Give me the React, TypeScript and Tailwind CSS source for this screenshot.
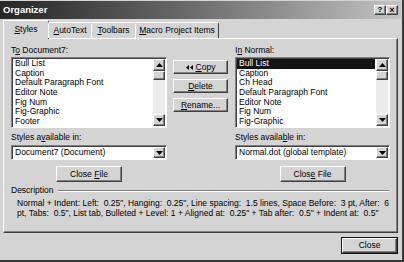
import React from "react";

const raised =
  "border border-t-white border-l-white border-r-[#404040] border-b-[#404040] shadow-[inset_-1px_-1px_#808080]";
const sunken =
  "border border-t-[#808080] border-l-[#808080] border-r-white border-b-white shadow-[inset_1px_1px_#404040]";

function Tri({ dir }: { dir: "up" | "down" | "left" }) {
  if (dir === "left")
    return (
      <svg width="7" height="5" viewBox="0 0 7 5" className="inline-block mr-[3px] align-middle">
        <polygon points="3,0 3,5 0,2.5" fill="#000" />
        <polygon points="7,0 7,5 4,2.5" fill="#000" />
      </svg>
    );
  return (
    <svg width="7" height="4" viewBox="0 0 7 4">
      <polygon points={dir === "up" ? "3.5,0 7,4 0,4" : "0,0 7,0 3.5,4"} fill="#000" />
    </svg>
  );
}

function Scrollbar() {
  return (
    <div className="w-[12px] flex flex-col">
      <div className={`${raised} h-[12px] bg-[#d4d4d4] flex items-center justify-center`}>
        <Tri dir="up" />
      </div>
      <div className={`${raised} h-[9px] bg-[#d4d4d4]`} />
      <div className="flex-1 bg-[#ececec]" />
      <div className={`${raised} h-[12px] bg-[#d4d4d4] flex items-center justify-center`}>
        <Tri dir="down" />
      </div>
    </div>
  );
}

function ListBox({ items, selected }: { items: string[]; selected?: number }) {
  return (
    <div className={`${sunken} h-[71px] flex bg-white p-[1px]`}>
      <div className="flex-1 flex flex-col pr-[1px]">
        {items.map((it, i) => (
          <div
            key={it}
            className={`h-[9.7px] leading-[9.7px] pl-[2px] whitespace-nowrap ${
              i === selected ? "bg-[#141414] text-white" : ""
            }`}
          >
            {it}
          </div>
        ))}
      </div>
      <Scrollbar />
    </div>
  );
}

function Dropdown({ value }: { value: string }) {
  return (
    <div className={`${sunken} h-[15px] flex items-stretch bg-white p-[1px]`}>
      <div className="flex-1 pl-[2px] leading-[11px] whitespace-nowrap">{value}</div>
      <div className={`${raised} w-[12px] bg-[#d4d4d4] flex items-center justify-center`}>
        <Tri dir="down" />
      </div>
    </div>
  );
}

function Btn({ children, className = "" }: { children: React.ReactNode; className?: string }) {
  return (
    <div
      className={`${raised} bg-[#d4d4d4] flex items-center justify-center whitespace-nowrap ${className}`}
    >
      <span>{children}</span>
    </div>
  );
}

function Column({
  label,
  items,
  selected,
  avail,
  dropdown,
  closeLabel,
}: {
  label: React.ReactNode;
  items: string[];
  selected?: number;
  avail: React.ReactNode;
  dropdown: string;
  closeLabel: React.ReactNode;
}) {
  return (
    <div className="flex flex-col">
      <div className="h-[11px] leading-[11px]">{label}</div>
      <div className="mt-[1px]">
        <ListBox items={items} selected={selected} />
      </div>
      <div className="h-[11px] leading-[11px] mt-[4px]">{avail}</div>
      <div className="mt-[2px]">
        <Dropdown value={dropdown} />
      </div>
      <div className="flex justify-center mt-[6px]">
        <Btn className="w-[66px] h-[16px]">{closeLabel}</Btn>
      </div>
    </div>
  );
}

export default function App() {
  const tabs = [
    { k: "S", r: "tyles", w: "w-[46px]" },
    { k: "A", r: "utoText", w: "w-[44px]" },
    { k: "T", r: "oolbars", w: "w-[45px]" },
    { k: "M", r: "acro Project Items", w: "w-[84px]" },
  ];
  return (
    <div className="w-[404px] h-[262px] bg-[#d4d4d4] font-['Liberation_Sans',Arial,sans-serif] text-[8.5px] text-black flex flex-col border-r-2 border-b-2 border-r-[#3a3a3a] border-b-[#3a3a3a] overflow-hidden">
      {/* title bar */}
      <div className="h-[18px] mt-[1px] mr-[1px] bg-linear-to-r from-[#262626] to-[#c4c4c4] flex items-center justify-between pl-[3px] pr-[3px]">
        <span className="text-white font-bold text-[9.5px]">Organizer</span>
        <div className="flex">
          <div className={`${raised} bg-[#d4d4d4] w-[12px] h-[10px] flex items-center justify-center font-bold text-[8px] leading-none`}>
            ?
          </div>
          <div className={`${raised} bg-[#d4d4d4] w-[12px] h-[10px] flex items-center justify-center font-bold text-[9px] leading-none`}>
            ×
          </div>
        </div>
      </div>

      {/* tabs */}
      <div className="flex items-end h-[19px] pl-[3px] relative z-10">
        {tabs.map((t, i) => (
          <div
            key={t.k}
            className={`${t.w} border-t border-l border-r border-t-white border-l-white border-r-[#404040] rounded-t-[2px] flex items-center justify-center ${
              i === 0 ? "h-[19px] bg-[#d4d4d4] -mb-[1px] pb-[1px]" : "h-[16px] -ml-[1px]"
            }`}
          >
            <span>
              <span className="underline">{t.k}</span>
              {t.r}
            </span>
          </div>
        ))}
      </div>

      {/* panel */}
      <div className="h-[195px] ml-[3px] mr-[4px] border border-t-white border-l-white border-r-[#404040] border-b-[#404040] shadow-[inset_-1px_-1px_#808080] px-[7px] pt-[6px] flex flex-col">
        <div className="flex">
          <div className="w-[156px]">
            <Column
              label={<>T<span className="underline">o</span> Document7:</>}
              items={["Bull List", "Caption", "Default Paragraph Font", "Editor Note", "Fig Num", "Fig-Graphic", "Footer"]}
              avail={<>Styles a<span className="underline">v</span>ailable in:</>}
              dropdown="Document7 (Document)"
              closeLabel={<>Close <span className="underline">F</span>ile</>}
            />
          </div>
          <div className="w-[55px] ml-[6px] mt-[15px] flex flex-col gap-[5px]">
            <Btn className="h-[14px]">
              <Tri dir="left" />
              <span className="underline">C</span>opy
            </Btn>
            <Btn className="h-[14px]">
              <span className="underline">D</span>elete
            </Btn>
            <Btn className="h-[14px]">
              <span className="underline">R</span>ename...
            </Btn>
          </div>
          <div className="w-[155px] ml-[7px]">
            <Column
              label={<>I<span className="underline">n</span> Normal:</>}
              items={["Bull List", "Caption", "Ch Head", "Default Paragraph Font", "Editor Note", "Fig Num", "Fig-Graphic"]}
              selected={0}
              avail={<>Styles availa<span className="underline">b</span>le in:</>}
              dropdown="Normal.dot (global template)"
              closeLabel={<>Clos<span className="underline">e</span> File</>}
            />
          </div>
        </div>

        {/* description */}
        <div className="flex items-center mt-[3px]">
          <span className="leading-[11px]">Description</span>
          <div className="flex-1 ml-[4px] mr-[1px] h-[2px] border-t border-t-[#808080] border-b border-b-white" />
        </div>
        <div className="pl-[6px] leading-[10px] whitespace-pre mt-[2px]">
          <div>{'Normal + Indent: Left:  0.25", Hanging:  0.25", Line spacing:  1.5 lines, Space Before:  3 pt, After:  6'}</div>
          <div>{'pt, Tabs:  0.5", List tab, Bulleted + Level: 1 + Aligned at:  0.25" + Tab after:  0.5" + Indent at:  0.5"'}</div>
        </div>
      </div>

      {/* bottom */}
      <div className="flex justify-end mr-[4px] mt-[4px]">
        <div className="border border-[#141414]">
          <Btn className="w-[55px] h-[15px]">Close</Btn>
        </div>
      </div>
    </div>
  );
}
